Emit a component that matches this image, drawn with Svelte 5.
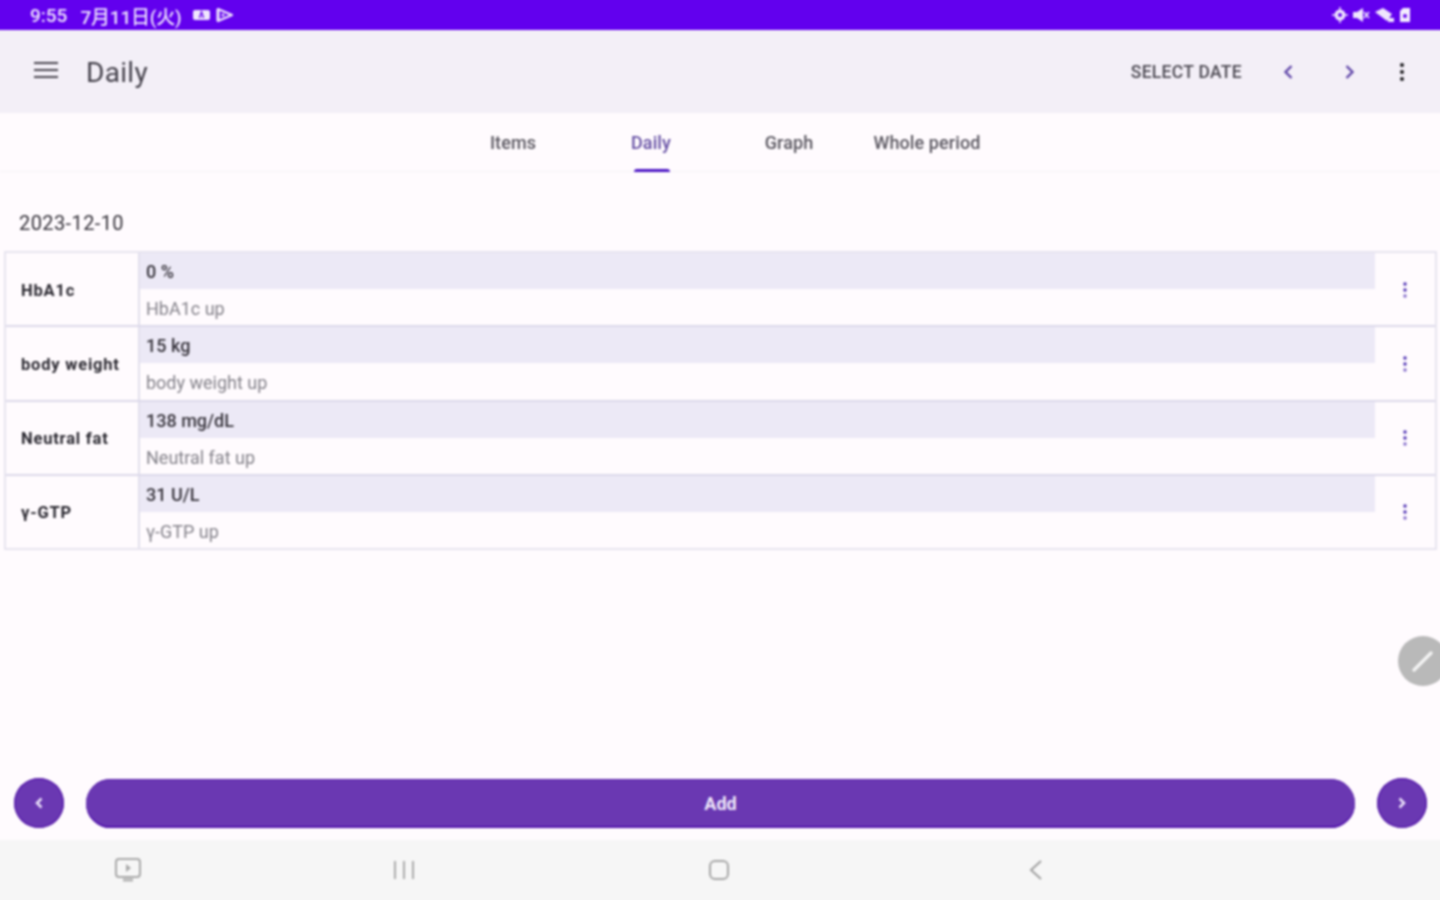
<script>
  const rows = [
    { name: 'HbA1c', value: '0 %', sub: 'HbA1c up' },
    { name: 'body weight', value: '15 kg', sub: 'body weight up' },
    { name: 'Neutral fat', value: '138 mg/dL', sub: 'Neutral fat up' },
    { name: 'γ-GTP', value: '31 U/L', sub: 'γ-GTP up' }
  ];
  const tabs = ['Items', 'Daily', 'Graph', 'Whole period'];
</script>

<div class="frame">
<div class="page">
  <header class="status">
    <div class="status-left">
      <span class="clock">9:55</span>
      <span class="date">7月11日(火)</span>
      <svg class="si first" width="19" height="14" viewBox="0 0 19 14"><rect x="1" y="2" width="17" height="10" rx="2" fill="#efe6fd"/><path d="M7.500 10l2-6 2 6" stroke="#6200ee" stroke-width="1.400" fill="none"/></svg>
      <svg class="si" width="18" height="18" viewBox="0 0 18 18"><path d="M2 3l14 6-14 6z" fill="none" stroke="#efe6fd" stroke-width="2.200" stroke-linejoin="round"/><path d="M2 3v12" stroke="#efe6fd" stroke-width="3"/><circle cx="7" cy="9" r="1.500" fill="#efe6fd"/></svg>
    </div>
    <div class="status-right">
      <svg width="16" height="16" viewBox="0 0 16 16"><circle cx="8" cy="8" r="5.500" fill="#efe6fd"/><circle cx="8" cy="8" r="2" fill="#6200ee"/><path d="M8 0v3M8 13v3M0 8h3M13 8h3" stroke="#efe6fd" stroke-width="1.500"/></svg>
      <svg width="18" height="16" viewBox="0 0 18 16"><path d="M1 5h4l6-4v14l-6-4H1z" fill="#efe6fd"/><path d="M12 5l5 6M17 5l-5 6" stroke="#efe6fd" stroke-width="1.600"/></svg>
      <svg width="21" height="16" viewBox="0 0 21 16"><path d="M1 5l8-4 9 6-5 7z" fill="#efe6fd"/><path d="M14 11h6v4h-6z" fill="#efe6fd"/></svg>
      <svg width="12" height="16" viewBox="0 0 12 16"><path d="M1 4l3-3h7v14H1z" fill="#f4eefe"/><circle cx="6" cy="9" r="2" fill="#6200ee"/></svg>
    </div>
  </header>

  <div class="toolbar">
    <svg class="menu" width="24" height="18" viewBox="0 0 24 18"><path d="M0 2h24M0 9h24M0 16h24" stroke="#49454f" stroke-width="2.200"/></svg>
    <h1>Daily</h1>
    <div class="actions">
      <span class="select">SELECT DATE</span>
      <svg class="chev c1" width="12" height="16" viewBox="0 0 12 16"><path d="M9.500 2L3.500 8l6 6" fill="none" stroke="#5f45a8" stroke-width="2.400"/></svg>
      <svg class="chev c2" width="12" height="16" viewBox="0 0 12 16"><path d="M2.500 2l6 6-6 6" fill="none" stroke="#5f45a8" stroke-width="2.400"/></svg>
      <svg class="more" width="6" height="20" viewBox="0 0 6 20"><circle cx="3" cy="3" r="2"/><circle cx="3" cy="10" r="2"/><circle cx="3" cy="17" r="2"/></svg>
    </div>
  </div>

  <nav class="tabs">
    {#each tabs as tab}
      <div class="tab" class:active={tab === 'Daily'}>{tab}</div>
    {/each}
  </nav>

  <main class="content">
    <div class="day">2023-12-10</div>
    <div class="table">
      {#each rows as row}
        <div class="row">
          <div class="name">{row.name}</div>
          <div class="vals">
            <div class="value">{row.value}</div>
            <div class="sub">{row.sub}</div>
          </div>
          <div class="row-more">
            <svg width="4" height="16" viewBox="0 0 4 16"><circle cx="2" cy="2" r="1.700"/><circle cx="2" cy="8" r="1.700"/><circle cx="2" cy="14" r="1.700" opacity=".7"/></svg>
          </div>
        </div>
      {/each}
    </div>
  </main>

  <div class="fab">
    <svg width="24" height="24" viewBox="0 0 24 24"><path d="M3 21L20 4" stroke="#f4f4f4" stroke-width="3.400" stroke-linecap="round"/></svg>
  </div>

  <div class="bottom">
    <button class="round" aria-label="Previous">
      <svg width="10" height="14" viewBox="0 0 10 14"><path d="M7.500 2.500L3 7l4.500 4.500" fill="none" stroke="#e8def8" stroke-width="2.600"/></svg>
    </button>
    <button class="add">Add</button>
    <button class="round" aria-label="Next">
      <svg width="10" height="14" viewBox="0 0 10 14"><path d="M2.500 2.500L7 7l-4.500 4.500" fill="none" stroke="#e8def8" stroke-width="2.600"/></svg>
    </button>
  </div>

  <footer class="nav">
    <svg class="n1" width="28" height="26" viewBox="0 0 28 26"><rect x="2" y="2" width="24" height="18" rx="3" fill="none" stroke="#a9a9a9" stroke-width="2"/><path d="M12 7l5 4-5 4z" fill="#a9a9a9"/><path d="M9 23h10" stroke="#b5b5b5" stroke-width="3"/></svg>
    <svg class="n2" width="22" height="20" viewBox="0 0 22 20"><path d="M2 1v18M11 1v18M20 1v18" stroke="#ababab" stroke-width="2"/></svg>
    <svg class="n3" width="22" height="22" viewBox="0 0 22 22"><rect x="2" y="2" width="18" height="18" rx="5" fill="none" stroke="#a5a5a5" stroke-width="2"/></svg>
    <svg class="n4" width="16" height="22" viewBox="0 0 16 22"><path d="M13 2L3 11l10 9" fill="none" stroke="#a0a0a0" stroke-width="2"/></svg>
  </footer>
</div>
</div>

<style>
  :global(body) {
    margin: 0;
    font-family: Roboto, "Noto Sans CJK JP", sans-serif;
  }
  .frame {
    width: 1440px;
    height: 900px;
    overflow: hidden;
  }
  .page {
    position: relative;
    width: 1440px;
    height: 900px;
    background: #fffbfe;
    box-shadow: 0 0 0 6px #fffbfe;
    display: flex;
    flex-direction: column;
    filter: blur(0.8px);
  }
  .status {
    height: 30px;
    flex: none;
    background: #6200ee;
    box-shadow: 0 -6px 0 #6200ee, -6px 0 0 #6200ee, 6px 0 0 #6200ee, -6px -6px 0 #6200ee, 6px -6px 0 #6200ee;
    color: #efe6fd;
    display: flex;
    justify-content: space-between;
    align-items: center;
    padding: 0 29px 0 30px;
    font-size: 19px;
    font-weight: 500;
    box-sizing: border-box;
  }
  .status-left, .status-right { display: flex; align-items: center; }
  .status-left .date { margin-left: 13px; font-size: 19px; letter-spacing: -0.2px; }
  .si { margin-left: 5px; }
  .si.first { margin-left: 11px; }
  .status-right { gap: 4px; }
  .toolbar {
    height: 83px;
    flex: none;
    background: #f3eff7;
    box-shadow: -6px 0 0 #f3eff7, 6px 0 0 #f3eff7;
    display: flex;
    align-items: center;
    padding-left: 34px;
    padding-right: 35px;
    box-sizing: border-box;
  }
  .menu { margin-top: -3px; }
  h1 {
    margin: 2px 0 0 28px;
    font-size: 28px;
    font-weight: 400;
    color: #45424c;
    letter-spacing: 0.3px;
  }
  .actions {
    margin-left: auto;
    display: flex;
    align-items: center;
  }
  .select {
    font-size: 17.500px;
    font-weight: 500;
    color: #4d4a53;
    letter-spacing: 0.3px;
  }
  .c1 { margin-left: 40px; }
  .c2 { margin-left: 50px; }
  .more { margin-left: 43px; fill: #1c1b1f; }
  .tabs {
    height: 59px;
    flex: none;
    display: flex;
    justify-content: center;
    border-bottom: 1px solid #f5f2f6;
    box-sizing: border-box;
  }
  .tab {
    position: relative;
    width: 138px;
    padding-top: 19px;
    text-align: center;
    font-size: 18px;
    font-weight: 500;
    letter-spacing: 0.1px;
    color: #5a5760;
    box-sizing: border-box;
  }
  .tab.active { color: #6650a4; }
  .tab.active::after {
    content: "";
    position: absolute;
    left: 52px;
    width: 36px;
    bottom: -1px;
    height: 3px;
    border-radius: 3px 3px 0 0;
    background: #4b14c4;
  }
  .content {
    flex: 1;
    min-height: 0;
    padding: 0 3px 0 4px;
  }
  .day {
    padding: 39px 0 0 15px;
    height: 40px;
    font-size: 20px;
    line-height: 24px;
    color: #35323a;
    letter-spacing: 0.4px;
  }
  .table {
    border: 2px solid #e7e4ef;
    box-sizing: border-box;
    height: 299px;
    display: flex;
    flex-direction: column;
  }
  .row {
    flex: 1;
    display: flex;
    min-height: 0;
    border-bottom: 2px solid #dcd9ea;
  }
  .row:last-child { border-bottom: none; }
  .name {
    width: 134px;
    flex: none;
    display: flex;
    align-items: center;
    padding: 2px 0 0 15px;
    box-sizing: border-box;
    font-size: 16.500px;
    font-weight: 700;
    color: #2a2830;
    letter-spacing: 0.8px;
    border-right: 2px solid #e2dfec;
  }
  .vals {
    width: 1235px;
    flex: none;
    display: flex;
    flex-direction: column;
  }
  .value {
    height: 36px;
    background: #ece9f6;
    padding-left: 6px;
    line-height: 38px;
    font-size: 18px;
    font-weight: 500;
    color: #37343c;
  }
  .sub {
    flex: 1;
    padding-left: 6px;
    line-height: 40px;
    font-size: 18px;
    color: #84828a;
  }
  .row-more {
    flex: 1;
    display: flex;
    align-items: center;
    justify-content: center;
    fill: #4a2bb0;
    padding-top: 1px;
  }
  .fab {
    position: absolute;
    left: 1398px;
    top: 636px;
    width: 50px;
    height: 50px;
    border-radius: 50%;
    background: #b9b9b9;
    display: flex;
    align-items: center;
    justify-content: center;
  }
  .bottom {
    flex: none;
    height: 50px;
    display: flex;
    align-items: center;
    padding: 0 13px 0 14px;
    gap: 22px;
    margin-bottom: 12px;
  }
  .round {
    width: 50px;
    height: 50px;
    flex: none;
    border: none;
    padding: 0;
    border-radius: 50%;
    background: #6a38b2;
    box-shadow: inset 0 0 0 1.500px #5c22ad;
    display: flex;
    align-items: center;
    justify-content: center;
  }
  .add {
    flex: 1;
    height: 49px;
    margin-top: 1px;
    border: none;
    border-radius: 25px;
    background: #6a38b2;
    box-shadow: inset 0 -2px 0 #5315ac, inset 0 1px 0 #5c22ad;
    color: #efe8fa;
    font-family: inherit;
    font-size: 18px;
    font-weight: 700;
  }
  .nav {
    flex: none;
    height: 60px;
    background: #f6f6f6;
    box-shadow: 0 6px 0 #f6f6f6, -6px 0 0 #f6f6f6, 6px 0 0 #f6f6f6, -6px 6px 0 #f6f6f6, 6px 6px 0 #f6f6f6;
    display: grid;
    grid-template-columns: 128px 276px 315px 317px;
    align-items: center;
    justify-items: end;
  }
  .nav svg { transform: translateX(50%); }
</style>
